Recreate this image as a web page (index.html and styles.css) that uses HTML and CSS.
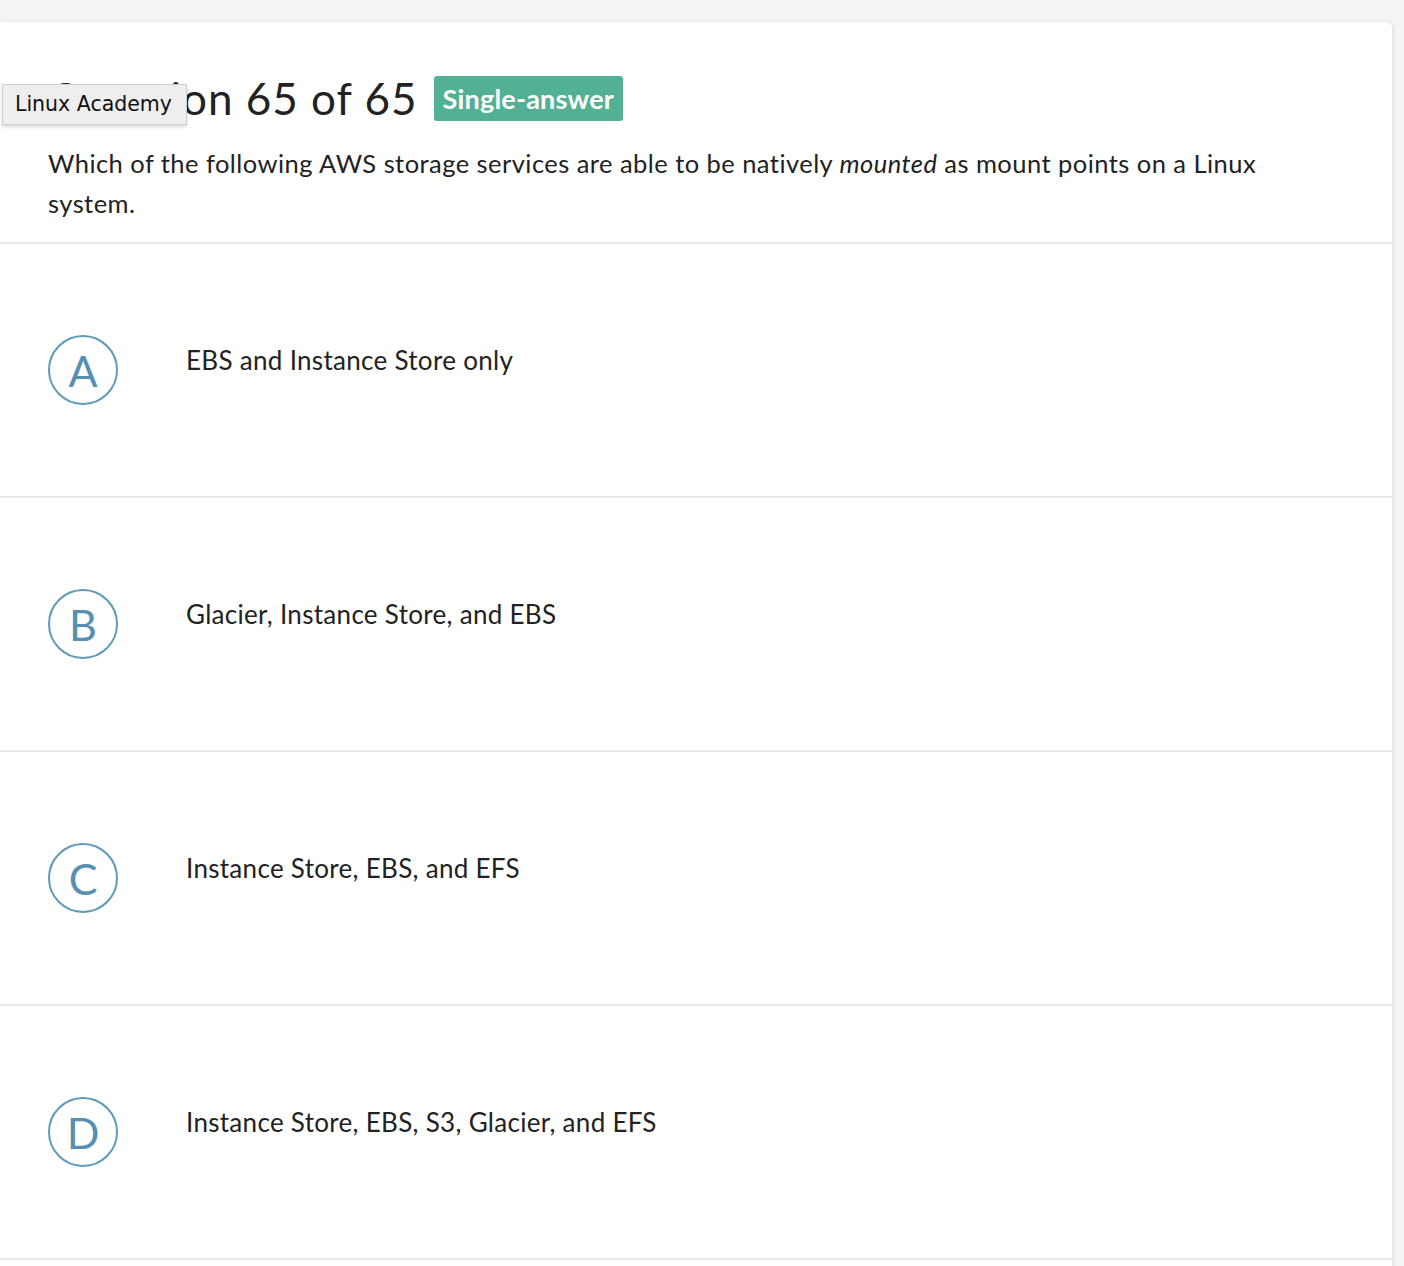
FILE: index.html
```html
<!DOCTYPE html>
<html lang="en">
<head>
<meta charset="utf-8">
<title>Question 65 of 65</title>
<link rel="stylesheet" href="styles.css">
</head>
<body>
<div class="card">
  <div class="header">
    <div class="title-row">
      <h1 class="title">Question 65 of 65</h1>
      <span class="badge">Single-answer</span>
    </div>
    <p class="question">Which of the following AWS storage services are able to be natively <em>mounted</em> as mount points on a Linux system.</p>
  </div>
  <div class="option">
    <span class="letter">A</span>
    <span class="answer">EBS and Instance Store only</span>
  </div>
  <div class="option">
    <span class="letter">B</span>
    <span class="answer">Glacier, Instance Store, and EBS</span>
  </div>
  <div class="option">
    <span class="letter">C</span>
    <span class="answer">Instance Store, EBS, and EFS</span>
  </div>
  <div class="option">
    <span class="letter">D</span>
    <span class="answer">Instance Store, EBS, S3, Glacier, and EFS</span>
  </div>
</div>
<div class="tooltip">Linux Academy</div>
</body>
</html>
```

FILE: styles.css
```css
html, body {
  margin: 0;
  padding: 0;
}
body {
  background: #f5f5f5;
  font-family: Lato, "Open Sans", sans-serif;
  color: #222;
  height: 1266px;
  overflow: hidden;
}
.card {
  margin-top: 22px;
  width: 1392px;
  padding-bottom: 40px;
  background: #fff;
  border-radius: 0 5px 0 0;
  box-shadow: 2px 0 4px rgba(0, 0, 0, 0.08);
}
.header {
  padding: 52px 48px 19px 48px;
  border-bottom: 2px solid #e8e8e8;
}
.title-row {
  display: flex;
  align-items: center;
  gap: 16px;
  height: 48px;
}
.title {
  margin: 0;
  font-size: 44px;
  line-height: 48px;
  font-weight: 400;
  color: #222;
  letter-spacing: 1px;
}
.badge {
  display: inline-block;
  background: #52b195;
  color: #fff;
  font-weight: 700;
  font-size: 27px;
  line-height: 45px;
  height: 45px;
  padding: 0 9px;
  border-radius: 3px;
  letter-spacing: 0.2px;
}
.question {
  margin: 21px 0 0 0;
  font-size: 25.5px;
  line-height: 40px;
  letter-spacing: 0.45px;
  color: #222;
  max-width: 1240px;
}
.question em {
  font-style: italic;
}
.option {
  display: flex;
  align-items: center;
  height: 252px;
  padding-left: 48px;
  border-bottom: 2px solid #e8e8e8;
}
.letter {
  box-sizing: border-box;
  width: 70px;
  height: 70px;
  border: 2px solid #5f9aba;
  border-radius: 50%;
  display: flex;
  align-items: center;
  justify-content: center;
  color: #5590b2;
  font-size: 43px;
  font-weight: 400;
  flex: none;
}
.answer {
  margin-left: 68px;
  margin-bottom: 20px;
  font-size: 26px;
  line-height: 36px;
  letter-spacing: 0.3px;
  color: #222;
}
.tooltip {
  position: absolute;
  left: 2px;
  top: 84px;
  box-sizing: border-box;
  width: 185px;
  height: 41px;
  background: #eeeeee;
  border: 1px solid #cfcfcf;
  box-shadow: 0 2px 3px rgba(0, 0, 0, 0.15);
  font-family: "DejaVu Sans", sans-serif;
  font-size: 20.5px;
  line-height: 39px;
  padding-left: 12px;
  color: #111;
}
```
